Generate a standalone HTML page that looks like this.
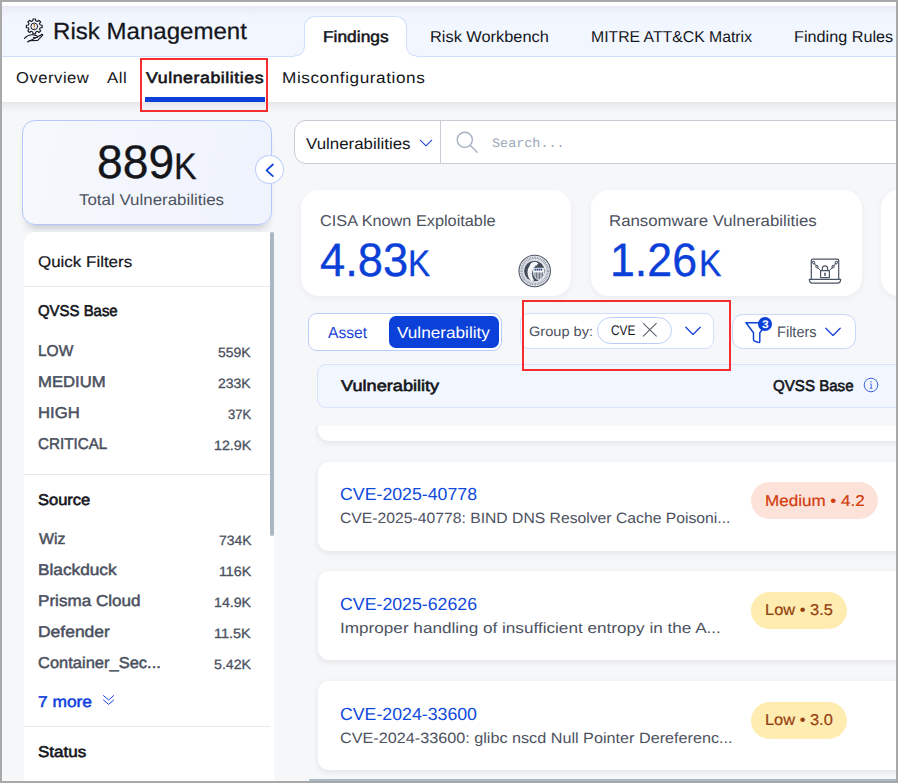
<!DOCTYPE html>
<html><head><meta charset="utf-8"><title>Risk Management</title>
<style>
html,body{margin:0;padding:0;}
body{width:898px;height:783px;overflow:hidden;background:#a9a9a9;position:relative;font-family:"Liberation Sans",sans-serif;}
#f{position:absolute;left:2px;top:2px;width:894px;height:779px;background:#f6f7f9;overflow:hidden;}
/* everything inside uses page coords via #o offset */
#o{position:absolute;left:-2px;top:-2px;width:898px;height:783px;}
.a{position:absolute;box-sizing:border-box;}
.t{position:absolute;white-space:pre;line-height:60px;transform-origin:0 0;text-rendering:geometricPrecision;}
svg{position:absolute;overflow:visible;}
</style></head><body>
<div id="f"><div id="o">

<!-- top white strip + header -->
<div class="a" style="left:0;top:2px;width:898px;height:4px;background:#fff;"></div>
<div class="a" style="left:0;top:6px;width:898px;height:50.5px;background:linear-gradient(#e7eaf2 0,#eef1f9 5px,#f2f6ff 12px,#f2f6ff 100%);border-bottom:1px solid #d2defa;"></div>
<!-- subnav -->
<div class="a" style="left:0;top:56.5px;width:898px;height:45.5px;background:#fff;"></div>
<div class="a" style="left:0;top:102px;width:898px;height:11px;background:linear-gradient(rgba(40,50,70,.085),rgba(40,50,70,.03) 45%,rgba(40,50,70,0));"></div>
<!-- Findings tab -->
<div class="a" style="left:304px;top:16px;width:103px;height:41px;background:#fff;border:1px solid #d2defa;border-bottom:none;border-radius:11px 11px 0 0;"></div>
<svg style="left:294px;top:46px;" width="11" height="11"><path d="M0 10 Q10 10 10.5 0 L11 0 L11 11 L0 11Z" fill="#fff"/><path d="M0 10 Q10 10 10.5 0" fill="none" stroke="#d2defa" stroke-width="1"/></svg>
<svg style="left:406px;top:46px;" width="11" height="11"><path d="M11 10 Q1 10 .5 0 L0 0 L0 11 L11 11Z" fill="#fff"/><path d="M11 10 Q1 10 .5 0" fill="none" stroke="#d2defa" stroke-width="1"/></svg>

<!-- risk icon -->
<svg style="left:23px;top:17px;" width="22" height="27" viewBox="0 0 22 27" fill="none" stroke="#1a1c22" stroke-width="1.15" stroke-linejoin="round" stroke-linecap="round">
<path d="M9.77 3.83 L10.00 1.99 L12.50 1.99 L12.73 3.83 L14.40 4.48 L15.95 3.33 L17.72 4.99 L16.50 6.44 L17.19 8.01 L19.15 8.23 L19.15 10.57 L17.19 10.79 L16.50 12.36 L17.72 13.81 L15.95 15.47 L14.40 14.32 L12.73 14.97 L12.50 16.81 L10.00 16.81 L9.77 14.97 L8.10 14.32 L6.55 15.47 L4.78 13.81 L6.00 12.36 L5.31 10.79 L3.35 10.57 L3.35 8.23 L5.31 8.01 L6.00 6.44 L4.78 4.99 L6.55 3.33 L8.10 4.48Z"/>
<circle cx="11.25" cy="9.4" r="3.4" stroke-width="1"/>
<path d="M11.25 7.3v2.5" stroke="#b86a18" stroke-width="1.1"/><path d="M11.25 11.3v.1" stroke="#b86a18" stroke-width="1.1"/>
<path d="M1.5 21.3 Q5.2 17.5 9.6 17.8 L13.6 18.8 Q15.3 19.5 14 20.5 L10.4 20.5 M14.4 20.1 L18.7 17.4 Q20.100 17 19.500 18.300 L14.700 23.400 L6.600 23.600 L4.600 24.900 Z" stroke-width="1.15"/>
</svg>

<!-- red box 1 + underline -->
<div class="a" style="left:145px;top:97px;width:120px;height:5px;background:#0b41d9;"></div>
<div class="a" style="left:140px;top:58px;width:128px;height:54px;border:2px solid #f72c31;"></div>

<!-- total card -->
<div class="a" style="left:22px;top:120px;width:250px;height:104.5px;border:1px solid #b3c8fc;border-radius:13px;background:linear-gradient(100deg,#f7f8fd,#eff3fd);box-shadow:0 8px 9px -5px rgba(20,25,40,.22);"></div>
<div class="a" style="left:255px;top:155px;width:29px;height:28.8px;border-radius:50%;background:#fff;border:1px solid #bccefc;"></div>
<svg style="left:263px;top:162px;" width="12" height="16" viewBox="0 0 12 16"><path d="M9.9 2.5 L3.5 8.3 L9.9 14.1" fill="none" stroke="#0b41d9" stroke-width="1.7" stroke-linecap="round" stroke-linejoin="round"/></svg>

<!-- sidebar panel -->
<div class="a" style="left:24px;top:231.7px;width:250px;height:560px;background:#fff;border-radius:10px 7px 0 0;"></div>
<div class="a" style="left:270px;top:232px;width:4px;height:304px;background:#aab8c3;border-radius:2px;"></div>
<div class="a" style="left:24px;top:286px;width:246px;height:1px;background:#e4e7ec;"></div>
<div class="a" style="left:24px;top:473.5px;width:246px;height:1px;background:#e4e7ec;"></div>
<div class="a" style="left:24px;top:725.7px;width:246px;height:1px;background:#e4e7ec;"></div>
<svg style="left:102px;top:694px;" width="14" height="14" viewBox="0 0 14 14" fill="none" stroke="#1a47de" stroke-width="1" stroke-linecap="round" stroke-linejoin="round"><path d="M1.500 1.600 L6.600 6 L11.700 1.600M1.500 6 L6.600 10.400 L11.700 6"/></svg>

<!-- search -->
<div class="a" style="left:293.7px;top:120px;width:640px;height:43.5px;background:#fff;border:1px solid #c7ccd5;border-radius:12px;"></div>
<div class="a" style="left:440.3px;top:120px;width:1px;height:43.5px;background:#c9ced6;"></div>
<svg style="left:418px;top:137.2px;" width="16" height="12" viewBox="0 0 16 12"><path d="M2.3 3.2 L8 8.8 L13.7 3.2" fill="none" stroke="#1a44d8" stroke-width="1.05" stroke-linecap="round" stroke-linejoin="round"/></svg>
<svg style="left:454px;top:129px;" width="26" height="26" viewBox="0 0 26 26" fill="none" stroke="#a5afc2" stroke-width="1.35" stroke-linecap="round"><circle cx="10.8" cy="10.8" r="7.6"/><path d="M16.4 16.4 L23.2 23.2"/></svg>

<!-- KPI cards -->
<div class="a" style="left:301px;top:190px;width:270.3px;height:105.5px;background:#fff;border-radius:18px;box-shadow:0 2px 6px rgba(30,40,70,.05);"></div>
<div class="a" style="left:591.3px;top:190px;width:270.3px;height:105.5px;background:#fff;border-radius:18px;box-shadow:0 2px 6px rgba(30,40,70,.05);"></div>
<div class="a" style="left:881px;top:190px;width:270.3px;height:105.5px;background:#fff;border-radius:18px;box-shadow:0 2px 6px rgba(30,40,70,.05);"></div>
<!-- CISA seal -->
<svg style="left:517px;top:253px;" width="36" height="36" viewBox="517 253 36 36">
<circle cx="534.7" cy="271" r="15.7" fill="#eceef2" stroke="#4e5666" stroke-width="1.1"/>
<circle cx="534.7" cy="271" r="13.2" fill="none" stroke="#8e96a4" stroke-width="2.5" stroke-dasharray="0.85 0.75"/>
<circle cx="534.7" cy="271" r="11.5" fill="none" stroke="#c9ced7" stroke-width=".7"/>
<circle cx="534.4" cy="271" r="10.3" fill="#434b5b"/>
<path d="M529.700 265.800 Q530.300 262.300 534.300 261.700 Q537.200 261.800 538.700 263.900 L536.900 264.300 L537.800 265.200 L535.600 265.600 Q535 266.900 533.900 267.600 L533.300 268.700 Q531.400 272.500 532.300 276.800 L534.100 280.600 Q532.500 281.400 531 280.900 Q527.600 277.300 527.500 272.300 Q527.700 268.200 529.700 265.800Z" fill="#f6f7f9"/>
<path d="M528.800 273.500 L533 269.500 M528.400 276.500 L532.200 272.900" stroke="#aeb4c0" stroke-width=".5"/>
<path d="M533.100 267.800 H544.100 V273.200 Q543.700 278.100 538.600 280.500 Q533.500 278.100 533.100 273.200Z" fill="#e2e5eb"/>
<path d="M534.600 269.600h8" stroke="#2f4a8a" stroke-width="1.7" stroke-dasharray="1.5 .5"/>
<path d="M533.100 271.500H544.100" stroke="#fff" stroke-width=".7"/>
<path d="M535 272.500v4.300M536.500 272.500v5.800M538 272.500v7M539.500 272.500v6.600M541 272.500v5.600M542.500 272.500v3.900" stroke="#4a5262" stroke-width=".75"/>
</svg>
<!-- laptop icon -->
<svg style="left:807px;top:257px;" width="36" height="28" viewBox="0 0 36 28" fill="none" stroke="#4a5563" stroke-width="1.2" stroke-linejoin="round" stroke-linecap="round">
<path d="M4.300 22.200 V3.600 Q4.300 2.200 5.700 2.200 H30.300 Q31.700 2.200 31.700 3.600 V22.200"/>
<path d="M2.300 22.400 H33.700 Q33.400 26.200 30.600 26.200 H5.400 Q2.600 26.200 2.300 22.400Z"/>
<rect x="13.600" y="13.600" width="8.800" height="7" rx=".6"/>
<path d="M15.300 13.400 v-1.600 a2.700 2.900 0 0 1 5.400 0 v1.600"/>
<path d="M18 16.200v2.200" stroke-width="1.5"/>
<ellipse cx="6.700" cy="5.600" rx="1" ry="1.400" transform="rotate(-35 6.700 5.600)" stroke-width="1"/>
<ellipse cx="9.900" cy="9.700" rx="1" ry="1.400" transform="rotate(-35 9.900 9.700)" stroke-width="1"/>
<path d="M7.600 6.900 l1.400 1.600 M10.900 10.900 l2.600 2.600" stroke-width="1"/>
<ellipse cx="29.300" cy="5.600" rx="1" ry="1.400" transform="rotate(35 29.300 5.600)" stroke-width="1"/>
<ellipse cx="26.100" cy="9.700" rx="1" ry="1.400" transform="rotate(35 26.100 9.700)" stroke-width="1"/>
<path d="M28.400 6.900 l-1.400 1.600 M25.100 10.900 l-2.600 2.600" stroke-width="1"/>
</svg>

<!-- toggle -->
<div class="a" style="left:308px;top:313px;width:193.7px;height:37.5px;background:#fff;border:1px solid #b9cdfb;border-radius:9px;"></div>
<div class="a" style="left:388.5px;top:316px;width:110.7px;height:32px;background:#0b41d9;border-radius:7px;"></div>
<!-- group by -->
<div class="a" style="left:520px;top:313px;width:193.6px;height:35.5px;background:#fff;border:1px solid #d2defa;border-radius:9px;"></div>
<div class="a" style="left:597px;top:316.8px;width:74.5px;height:27px;background:#fff;border:1px solid #b9cdfb;border-radius:14px;"></div>
<svg style="left:640.5px;top:321.3px;" width="18" height="18" viewBox="0 0 18 18"><path d="M2.300 2.400 L15.300 15.200 M15.300 2.400 L2.300 15.200" fill="none" stroke="#575d69" stroke-width="1.05" stroke-linecap="round"/></svg>
<svg style="left:684px;top:325px;" width="18" height="12" viewBox="0 0 18 12"><path d="M1.800 2.200 L9 9.400 L16.200 2.200" fill="none" stroke="#1a44d8" stroke-width="1.35" stroke-linecap="round" stroke-linejoin="round"/></svg>
<!-- filters -->
<div class="a" style="left:732.2px;top:313.9px;width:123.8px;height:35.6px;background:#fff;border:1px solid #c9d8fb;border-radius:11px;"></div>
<svg style="left:745px;top:321px;" width="24" height="24" viewBox="0 0 24 24"><path d="M1 1.700 H22.500 L14.800 11.700 V20.300 Q14.800 21.900 13.300 21.400 L9.700 20.200 Q8.500 19.800 8.500 18.600 V11.700Z" fill="none" stroke="#0b41d9" stroke-width="1.45" stroke-linejoin="round"/></svg>
<div class="a" style="left:758.1px;top:316.7px;width:14.400px;height:14.400px;border-radius:50%;background:#0b41d9;"></div>
<svg style="left:823.8px;top:325.8px;" width="18" height="12" viewBox="0 0 18 12"><path d="M1.800 2.200 L9 9.400 L16.200 2.200" fill="none" stroke="#1a44d8" stroke-width="1.35" stroke-linecap="round" stroke-linejoin="round"/></svg>

<!-- table header -->
<div class="a" style="left:317px;top:364px;width:640px;height:43.8px;background:#f2f6fe;border:1px solid #d8e3fc;border-radius:9px;"></div>
<svg style="left:862.6px;top:377px;" width="16" height="16" viewBox="0 0 16 16" fill="none" stroke="#3a62e0" stroke-width="1"><circle cx="8" cy="8" r="6.800"/><path d="M7.300 6.900h.9v4.300M6.900 11.300h2.400" stroke-width=".9"/><circle cx="8" cy="4.700" r=".7" fill="#3a62e0" stroke="none"/></svg>

<div class="a" style="left:522.4px;top:300px;width:208.5px;height:71.3px;border:2px solid #f72c31;"></div>
<!-- rows (clipped scroll area) -->
<div class="a" style="left:300px;top:426px;width:600px;height:360px;overflow:hidden;">
 <div class="a" style="left:18.400px;top:-40px;width:640px;height:55px;background:#fff;border-radius:11px;box-shadow:0 2px 6px rgba(20,25,40,.085);"></div>
 <div class="a" style="left:18.400px;top:36.2px;width:640px;height:88.6px;background:#fff;border-radius:11px;box-shadow:0 2px 6px rgba(20,25,40,.085);"></div>
 <div class="a" style="left:18.400px;top:145.4px;width:640px;height:88.7px;background:#fff;border-radius:11px;box-shadow:0 2px 6px rgba(20,25,40,.085);"></div>
 <div class="a" style="left:18.400px;top:254.5px;width:640px;height:89.6px;background:#fff;border-radius:11px;box-shadow:0 2px 6px rgba(20,25,40,.085);"></div>
</div>
<div class="a" style="left:751.2px;top:482px;width:126.9px;height:36.8px;border-radius:18.500px;background:#fde2da;"></div>
<div class="a" style="left:751.2px;top:592px;width:95.7px;height:36.8px;border-radius:18.500px;background:#feecb0;"></div>
<div class="a" style="left:751.2px;top:702px;width:95.7px;height:36.6px;border-radius:18.500px;background:#feecb0;"></div>

<div class="a" style="left:309px;top:779px;width:600px;height:2.2px;background:#a9bbc7;border-radius:1px 0 0 1px;"></div>
<span class="t" style="left:53.20px;top:1px;font-size:23.4px;font-weight:400;color:#14161b;transform:scaleX(1.0288);font-family:'Liberation Sans',sans-serif;-webkit-text-stroke:0.25px #14161b;">Risk Management</span>
<span class="t" style="left:322.66px;top:8px;font-size:15.8px;font-weight:400;color:#14161b;transform:scaleX(1.0992);font-family:'Liberation Sans',sans-serif;-webkit-text-stroke:0.5px #14161b;">Findings</span>
<span class="t" style="left:430.03px;top:8px;font-size:15.8px;font-weight:400;color:#14161b;transform:scaleX(1.0355);font-family:'Liberation Sans',sans-serif;">Risk Workbench</span>
<span class="t" style="left:591.08px;top:8px;font-size:15.8px;font-weight:400;color:#14161b;transform:scaleX(0.9989);font-family:'Liberation Sans',sans-serif;">MITRE ATT&amp;CK Matrix</span>
<span class="t" style="left:794.14px;top:8px;font-size:15.8px;font-weight:400;color:#14161b;transform:scaleX(1.0274);font-family:'Liberation Sans',sans-serif;">Finding Rules</span>
<span class="t" style="left:16.22px;top:49px;font-size:15.6px;font-weight:400;color:#14161b;transform:scaleX(1.0633);font-family:'Liberation Sans',sans-serif;letter-spacing:0.5px;">Overview</span>
<span class="t" style="left:107.40px;top:49px;font-size:15.6px;font-weight:400;color:#14161b;transform:scaleX(1.0747);font-family:'Liberation Sans',sans-serif;letter-spacing:0.5px;">All</span>
<span class="t" style="left:146.37px;top:49px;font-size:15.6px;font-weight:400;color:#14161b;transform:scaleX(1.1367);font-family:'Liberation Sans',sans-serif;letter-spacing:0.5px;-webkit-text-stroke:0.6px #14161b;">Vulnerabilities</span>
<span class="t" style="left:282.15px;top:49px;font-size:15.6px;font-weight:400;color:#14161b;transform:scaleX(1.1040);font-family:'Liberation Sans',sans-serif;letter-spacing:0.5px;">Misconfigurations</span>
<span class="t" style="left:96.65px;top:132px;font-size:47px;font-weight:400;color:#14161b;transform:scaleX(0.9831);font-family:'Liberation Sans',sans-serif;-webkit-text-stroke:0.35px #14161b;">889</span>
<span class="t" style="left:174.35px;top:137px;font-size:37px;font-weight:400;color:#14161b;transform:scaleX(0.9175);font-family:'Liberation Sans',sans-serif;-webkit-text-stroke:0.3px #14161b;">K</span>
<span class="t" style="left:78.61px;top:171px;font-size:15.7px;font-weight:400;color:#4d5261;transform:scaleX(1.0780);font-family:'Liberation Sans',sans-serif;">Total Vulnerabilities</span>
<span class="t" style="left:306.33px;top:115px;font-size:15.7px;font-weight:400;color:#14161b;transform:scaleX(1.0761);font-family:'Liberation Sans',sans-serif;">Vulnerabilities</span>
<span class="t" style="left:491.62px;top:114px;font-size:13px;font-weight:400;color:#9ba6b8;transform:scaleX(1.0344);font-family:'Liberation Mono',sans-serif;">Search...</span>
<span class="t" style="left:319.99px;top:192px;font-size:15.7px;font-weight:400;color:#4d5261;transform:scaleX(1.0380);font-family:'Liberation Sans',sans-serif;">CISA Known Exploitable</span>
<span class="t" style="left:319.55px;top:230px;font-size:47px;font-weight:400;color:#0b40d8;transform:scaleX(0.9639);font-family:'Liberation Sans',sans-serif;-webkit-text-stroke:0.35px #0b40d8;">4.83</span>
<span class="t" style="left:408.30px;top:234px;font-size:37px;font-weight:400;color:#0b40d8;transform:scaleX(0.8989);font-family:'Liberation Sans',sans-serif;-webkit-text-stroke:0.3px #0b40d8;">K</span>
<span class="t" style="left:609.39px;top:192px;font-size:15.7px;font-weight:400;color:#4d5261;transform:scaleX(1.0710);font-family:'Liberation Sans',sans-serif;">Ransomware Vulnerabilities</span>
<span class="t" style="left:610.08px;top:230px;font-size:47px;font-weight:400;color:#0b40d8;transform:scaleX(0.9513);font-family:'Liberation Sans',sans-serif;-webkit-text-stroke:0.35px #0b40d8;">1.26</span>
<span class="t" style="left:698.77px;top:234px;font-size:37px;font-weight:400;color:#0b40d8;transform:scaleX(0.9082);font-family:'Liberation Sans',sans-serif;-webkit-text-stroke:0.3px #0b40d8;">K</span>
<span class="t" style="left:327.72px;top:304px;font-size:16px;font-weight:400;color:#1a44d8;transform:scaleX(0.9772);font-family:'Liberation Sans',sans-serif;">Asset</span>
<span class="t" style="left:397.46px;top:304px;font-size:16px;font-weight:400;color:#ffffff;transform:scaleX(1.0730);font-family:'Liberation Sans',sans-serif;">Vulnerability</span>
<span class="t" style="left:529.25px;top:302px;font-size:13.5px;font-weight:400;color:#4d5261;transform:scaleX(1.0800);font-family:'Liberation Sans',sans-serif;">Group by:</span>
<span class="t" style="left:611.08px;top:300px;font-size:14px;font-weight:400;color:#14161b;transform:scaleX(0.8509);font-family:'Liberation Sans',sans-serif;">CVE</span>
<span class="t" style="left:777.38px;top:303px;font-size:15.1px;font-weight:400;color:#4d5261;transform:scaleX(0.9649);font-family:'Liberation Sans',sans-serif;">Filters</span>
<span class="t" style="left:761.95px;top:295px;font-size:11px;font-weight:700;color:#ffffff;transform:scaleX(1.0900);font-family:'Liberation Sans',sans-serif;">3</span>
<span class="t" style="left:340.90px;top:357px;font-size:15.5px;font-weight:400;color:#14161b;transform:scaleX(1.1708);font-family:'Liberation Sans',sans-serif;-webkit-text-stroke:0.6px #14161b;">Vulnerability</span>
<span class="t" style="left:773.06px;top:357px;font-size:15.5px;font-weight:400;color:#14161b;transform:scaleX(0.9741);font-family:'Liberation Sans',sans-serif;-webkit-text-stroke:0.6px #14161b;">QVSS Base</span>
<span class="t" style="left:37.71px;top:233px;font-size:15.5px;font-weight:400;color:#14161b;transform:scaleX(1.0934);font-family:'Liberation Sans',sans-serif;-webkit-text-stroke:0.2px #14161b;">Quick Filters</span>
<span class="t" style="left:37.97px;top:282px;font-size:15.5px;font-weight:400;color:#14161b;transform:scaleX(0.9631);font-family:'Liberation Sans',sans-serif;-webkit-text-stroke:0.6px #14161b;">QVSS Base</span>
<span class="t" style="left:37.79px;top:322px;font-size:15.7px;font-weight:400;color:#4b5160;transform:scaleX(0.9869);font-family:'Liberation Sans',sans-serif;-webkit-text-stroke:0.5px #4b5160;">LOW</span>
<span class="t" style="left:218.31px;top:323px;font-size:13.5px;font-weight:400;color:#4b5160;transform:scaleX(1.0369);font-family:'Liberation Sans',sans-serif;-webkit-text-stroke:0.3px #4b5160;">559K</span>
<span class="t" style="left:37.72px;top:353px;font-size:15.7px;font-weight:400;color:#4b5160;transform:scaleX(1.0639);font-family:'Liberation Sans',sans-serif;-webkit-text-stroke:0.5px #4b5160;">MEDIUM</span>
<span class="t" style="left:218.40px;top:354px;font-size:13.5px;font-weight:400;color:#4b5160;transform:scaleX(1.0343);font-family:'Liberation Sans',sans-serif;-webkit-text-stroke:0.3px #4b5160;">233K</span>
<span class="t" style="left:37.70px;top:384px;font-size:15.7px;font-weight:400;color:#4b5160;transform:scaleX(1.0634);font-family:'Liberation Sans',sans-serif;-webkit-text-stroke:0.5px #4b5160;">HIGH</span>
<span class="t" style="left:227.93px;top:385px;font-size:13.5px;font-weight:400;color:#4b5160;transform:scaleX(0.9648);font-family:'Liberation Sans',sans-serif;-webkit-text-stroke:0.3px #4b5160;">37K</span>
<span class="t" style="left:38.37px;top:415px;font-size:15.7px;font-weight:400;color:#4b5160;transform:scaleX(0.9698);font-family:'Liberation Sans',sans-serif;-webkit-text-stroke:0.5px #4b5160;">CRITICAL</span>
<span class="t" style="left:213.98px;top:416px;font-size:13.5px;font-weight:400;color:#4b5160;transform:scaleX(1.0563);font-family:'Liberation Sans',sans-serif;-webkit-text-stroke:0.3px #4b5160;">12.9K</span>
<span class="t" style="left:37.68px;top:471px;font-size:15.5px;font-weight:400;color:#14161b;transform:scaleX(1.0642);font-family:'Liberation Sans',sans-serif;-webkit-text-stroke:0.6px #14161b;">Source</span>
<span class="t" style="left:38.80px;top:510px;font-size:15.7px;font-weight:400;color:#4b5160;transform:scaleX(1.0107);font-family:'Liberation Sans',sans-serif;-webkit-text-stroke:0.5px #4b5160;">Wiz</span>
<span class="t" style="left:218.58px;top:511px;font-size:13.5px;font-weight:400;color:#4b5160;transform:scaleX(1.0284);font-family:'Liberation Sans',sans-serif;-webkit-text-stroke:0.3px #4b5160;">734K</span>
<span class="t" style="left:37.66px;top:541px;font-size:15.7px;font-weight:400;color:#4b5160;transform:scaleX(1.0983);font-family:'Liberation Sans',sans-serif;-webkit-text-stroke:0.5px #4b5160;">Blackduck</span>
<span class="t" style="left:218.78px;top:542px;font-size:13.5px;font-weight:400;color:#4b5160;transform:scaleX(1.0557);font-family:'Liberation Sans',sans-serif;-webkit-text-stroke:0.3px #4b5160;">116K</span>
<span class="t" style="left:37.68px;top:572px;font-size:15.7px;font-weight:400;color:#4b5160;transform:scaleX(1.0888);font-family:'Liberation Sans',sans-serif;-webkit-text-stroke:0.5px #4b5160;">Prisma Cloud</span>
<span class="t" style="left:214.18px;top:573px;font-size:13.5px;font-weight:400;color:#4b5160;transform:scaleX(1.0504);font-family:'Liberation Sans',sans-serif;-webkit-text-stroke:0.3px #4b5160;">14.9K</span>
<span class="t" style="left:37.64px;top:603px;font-size:15.7px;font-weight:400;color:#4b5160;transform:scaleX(1.1136);font-family:'Liberation Sans',sans-serif;-webkit-text-stroke:0.5px #4b5160;">Defender</span>
<span class="t" style="left:214.47px;top:604px;font-size:13.5px;font-weight:400;color:#4b5160;transform:scaleX(1.0731);font-family:'Liberation Sans',sans-serif;-webkit-text-stroke:0.3px #4b5160;">11.5K</span>
<span class="t" style="left:38.33px;top:634px;font-size:15.7px;font-weight:400;color:#4b5160;transform:scaleX(1.0508);font-family:'Liberation Sans',sans-serif;-webkit-text-stroke:0.5px #4b5160;">Container_Sec...</span>
<span class="t" style="left:214.21px;top:635px;font-size:13.5px;font-weight:400;color:#4b5160;transform:scaleX(1.0498);font-family:'Liberation Sans',sans-serif;-webkit-text-stroke:0.3px #4b5160;">5.42K</span>
<span class="t" style="left:37.63px;top:673px;font-size:15.7px;font-weight:400;color:#0f40de;transform:scaleX(1.1064);font-family:'Liberation Sans',sans-serif;-webkit-text-stroke:0.5px #0f40de;">7 more</span>
<span class="t" style="left:37.76px;top:723px;font-size:15.5px;font-weight:400;color:#14161b;transform:scaleX(1.0975);font-family:'Liberation Sans',sans-serif;-webkit-text-stroke:0.6px #14161b;">Status</span>
<span class="t" style="left:340.12px;top:464px;font-size:17.5px;font-weight:400;color:#0f49dc;transform:scaleX(1.0137);font-family:'Liberation Sans',sans-serif;">CVE-2025-40778</span>
<span class="t" style="left:340.31px;top:489px;font-size:14.9px;font-weight:400;color:#4d5261;transform:scaleX(1.0552);font-family:'Liberation Sans',sans-serif;">CVE-2025-40778: BIND DNS Resolver Cache Poisoni...</span>
<span class="t" style="left:340.12px;top:574px;font-size:17.5px;font-weight:400;color:#0f49dc;transform:scaleX(1.0137);font-family:'Liberation Sans',sans-serif;">CVE-2025-62626</span>
<span class="t" style="left:339.50px;top:599px;font-size:14.9px;font-weight:400;color:#4d5261;transform:scaleX(1.1512);font-family:'Liberation Sans',sans-serif;">Improper handling of insufficient entropy in the A...</span>
<span class="t" style="left:340.12px;top:684px;font-size:17.5px;font-weight:400;color:#0f49dc;transform:scaleX(1.0129);font-family:'Liberation Sans',sans-serif;">CVE-2024-33600</span>
<span class="t" style="left:340.28px;top:709px;font-size:14.9px;font-weight:400;color:#4d5261;transform:scaleX(1.0878);font-family:'Liberation Sans',sans-serif;">CVE-2024-33600: glibc nscd Null Pointer Dereferenc...</span>
<span class="t" style="left:764.54px;top:472px;font-size:15.7px;font-weight:400;color:#d23c0c;transform:scaleX(1.0860);font-family:'Liberation Sans',sans-serif;-webkit-text-stroke:0.2px #d23c0c;">Medium • 4.2</span>
<span class="t" style="left:764.59px;top:581px;font-size:15.7px;font-weight:400;color:#95400f;transform:scaleX(1.0470);font-family:'Liberation Sans',sans-serif;-webkit-text-stroke:0.2px #95400f;">Low • 3.5</span>
<span class="t" style="left:764.59px;top:691px;font-size:15.7px;font-weight:400;color:#95400f;transform:scaleX(1.0458);font-family:'Liberation Sans',sans-serif;-webkit-text-stroke:0.2px #95400f;">Low • 3.0</span>
</div></div>
</body></html>
